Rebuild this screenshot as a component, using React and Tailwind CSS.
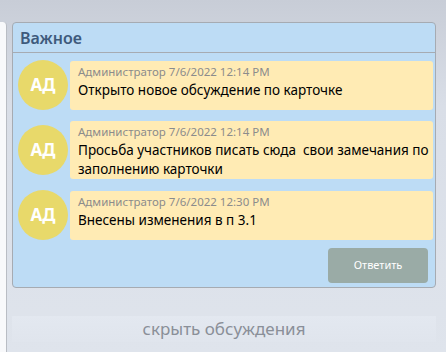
import React from "react";

const messages = [
  { author: "Администратор", date: "7/6/2022 12:14 PM", text: "Открыто новое обсуждение по карточке" },
  {
    author: "Администратор",
    date: "7/6/2022 12:14 PM",
    text: "Просьба участников писать сюда  свои замечания по заполнению карточки",
  },
  { author: "Администратор", date: "7/6/2022 12:30 PM", text: "Внесены изменения в п 3.1" },
];

function Message({ author, date, text }) {
  return (
    <div className="flex items-center gap-[2px]">
      <div className="w-[50px] h-[50px] shrink-0 rounded-full bg-[#e8d96a] flex items-center justify-center text-white font-bold text-[17px] ml-[5px]">
        АД
      </div>
      <div className="flex-1 min-h-[49px] bg-[#ffebb4] rounded-[3px] pl-[8px] pr-[4px] pt-[2px]">
        <div className="text-[11.5px] leading-[18px] text-[#8c8c8c]">
          {author} {date}
        </div>
        <div className="text-[13.5px] leading-[19px] text-black whitespace-pre-wrap">{text}</div>
      </div>
    </div>
  );
}

export default function App() {
  return (
    <div
      className="w-[446px] h-[352px] overflow-hidden flex bg-gradient-to-b from-[#c8cdd7] via-[#d9dee7] via-30% to-[#dfe4ec]"
      style={{ fontFamily: '"Noto Sans", "Open Sans", sans-serif' }}
    >
      {/* left panel edge */}
      <div className="w-[7px] mt-[22px] bg-[#f8f9fb] border-r border-[#b9bdc4] rounded-tr-[4px] shrink-0" />

      <div className="flex-1 flex flex-col pl-[5px] pr-[10px] pt-[22px]">
        {/* Card */}
        <div className="bg-[#bddcf5] border border-[#a6abb2] rounded-[4px]">
          <div className="h-[30px] px-[7px] flex items-center border-b border-[#a6abb2] text-[16px] font-semibold text-[#3e5a7c]">
            Важное
          </div>
          <div className="flex flex-col gap-[11px] pt-[7px] pr-[2px]">
            {messages.map((m, i) => (
              <Message key={i} {...m} />
            ))}
          </div>
          <div className="flex justify-end pt-[8px] pb-[4px] pr-[7px]">
            <button className="w-[100px] h-[35px] rounded-[4px] bg-[#9aaba6] text-white text-[11px]">
              Ответить
            </button>
          </div>
        </div>

        <div className="mt-[28px] h-[26px] bg-gradient-to-b from-[#e3e8f0] to-[#e0e5ed] flex items-center justify-center text-[17px] text-[#8a8f98]">
          скрыть обсуждения
        </div>
      </div>
    </div>
  );
}
